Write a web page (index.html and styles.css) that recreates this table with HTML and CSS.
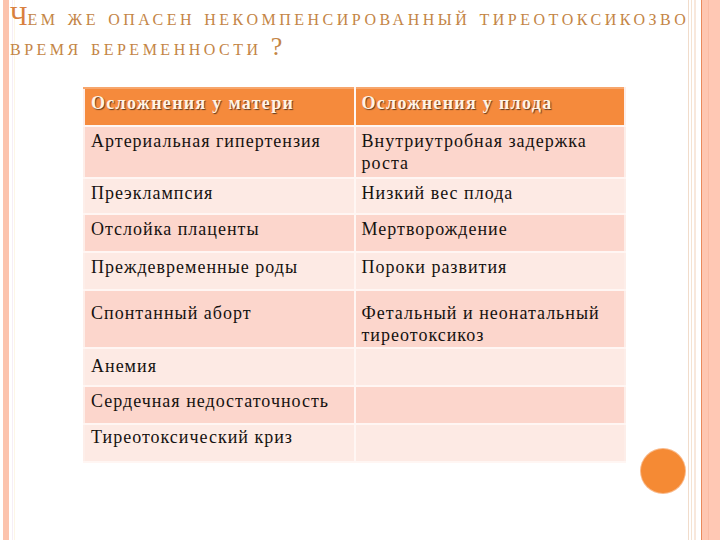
FILE: index.html
```html
<!DOCTYPE html>
<html lang="ru">
<head>
<meta charset="utf-8">
<title>Тиреотоксикоз</title>
<link rel="stylesheet" href="styles.css">
</head>
<body>
<div class="slide">
  <div class="edge-left"><div class="bar"></div></div>
  <main class="main">
    <h1 class="title"><span class="big">Ч</span>ем же опасен некомпенсированный тиреотоксикозво<br>время беременности <span class="q">?</span></h1>
    <div class="content">
      <table class="grid">
        <tr class="head"><th>Осложнения у матери</th><th>Осложнения у плода</th></tr>
        <tr class="dark r2"><td>Артериальная гипертензия</td><td>Внутриутробная задержка роста</td></tr>
        <tr class="light r1a"><td>Преэклампсия</td><td>Низкий вес плода</td></tr>
        <tr class="dark r1"><td>Отслойка плаценты</td><td>Мертворождение</td></tr>
        <tr class="light r1"><td>Преждевременные роды</td><td>Пороки развития</td></tr>
        <tr class="dark r3"><td>Спонтанный аборт</td><td>Фетальный и неонатальный тиреотоксикоз</td></tr>
        <tr class="light low"><td>Анемия</td><td></td></tr>
        <tr class="dark r1"><td>Сердечная недостаточность</td><td></td></tr>
        <tr class="light top"><td>Тиреотоксический криз</td><td></td></tr>
      </table>
      <div class="side"><div class="dot"></div></div>
    </div>
  </main>
  <div class="edge-right">
    <div class="l1"></div><div class="l2"></div><div class="l3"></div><div class="l4"></div><div class="fill"></div>
  </div>
</div>
</body>
</html>
```
FILE: styles.css
```css
html, body { margin: 0; padding: 0; background: #fff; }
.slide {
  width: 720px; height: 540px; display: flex; overflow: hidden;
  background: #fff;
}
.edge-left { width: 9px; flex: none; display: flex; }
.edge-left .bar { margin-left: 3px; width: 6px; background: #fcc3ad; }
.main {
  flex: 1; min-width: 0; position: relative;
  background: linear-gradient(to right, #fff 0, #fff 3px, #f6eef6 3px, #f6eef6 4px, #fff 4px, #fff 5px, #fdf6e6 5px, #fdf6e6 6px, #fff 6px);
}
.title {
  margin: 0; padding: 2px 0 0 1px;
  font-family: "Liberation Serif", serif;
  font-weight: normal; font-size: 23px; line-height: 29px;
  font-variant: small-caps; color: #c48546;
  white-space: nowrap; letter-spacing: 3.5px;
}
.title .big { font-size: 27px; color: #d9803e; letter-spacing: 0; }
.title .q { font-size: 26px; }
.content { display: flex; margin: 25px 0 0 74px; align-items: flex-start; }
.grid {
  border-collapse: collapse; width: 543px; table-layout: fixed;
  font-family: "Liberation Serif", serif;
  font-size: 18px; line-height: 22px; color: #161210; letter-spacing: 1px;
}
.grid th, .grid td {
  border: 2px solid #fff6f3; padding: 3px 6px 0 6px;
  vertical-align: top; text-align: left;
}
.grid th:first-child, .grid td:first-child { border-left-color: #fdeee9; }
.grid th:last-child, .grid td:last-child { border-right-color: #fdeee9; }
.head th {
  background: #f58a3c; color: #fff3e4; font-weight: bold;
  height: 33px; border-top-color: #f7a66c; padding-top: 3px;
  text-shadow: 1px 1px 1px #5e3a22; letter-spacing: 1.3px;
}
.dark td { background: #fcd6cc; }
.light td { background: #fdeae4; }
.r1 td { height: 33px; }
.r1a td { height: 31px; }
.r2 td { height: 47px; }
.r3 td { height: 45px; padding-top: 11px; }
.low td { height: 30px; padding-top: 6px; }
.top td { height: 35px; padding-top: 1px; }
.side { padding: 362px 0 0 15px; }
.dot {
  width: 44px; height: 44px; border-radius: 50%;
  background: #f58a34; box-shadow: 0 0 0 1px #f9b98a;
}
.edge-right { width: 34px; flex: none; display: flex; }
.edge-right .l1 { width: 1px; margin-left: 2px; background: #f1dccb; }
.edge-right .l2 { width: 1px; margin-left: 2px; background: #f5e3d2; }
.edge-right .l3 { width: 2px; margin-left: 2px; background: #f8e8dc; }
.edge-right .l4 { width: 1px; margin-left: 5px; background: #e98a5c; }
.edge-right .fill { flex: 1; background: linear-gradient(to right, #fec6b1 0, #fec6b1 6px, #f9bba4 6px, #f9bba4 7px, #ffc8b4 7px); }
```
